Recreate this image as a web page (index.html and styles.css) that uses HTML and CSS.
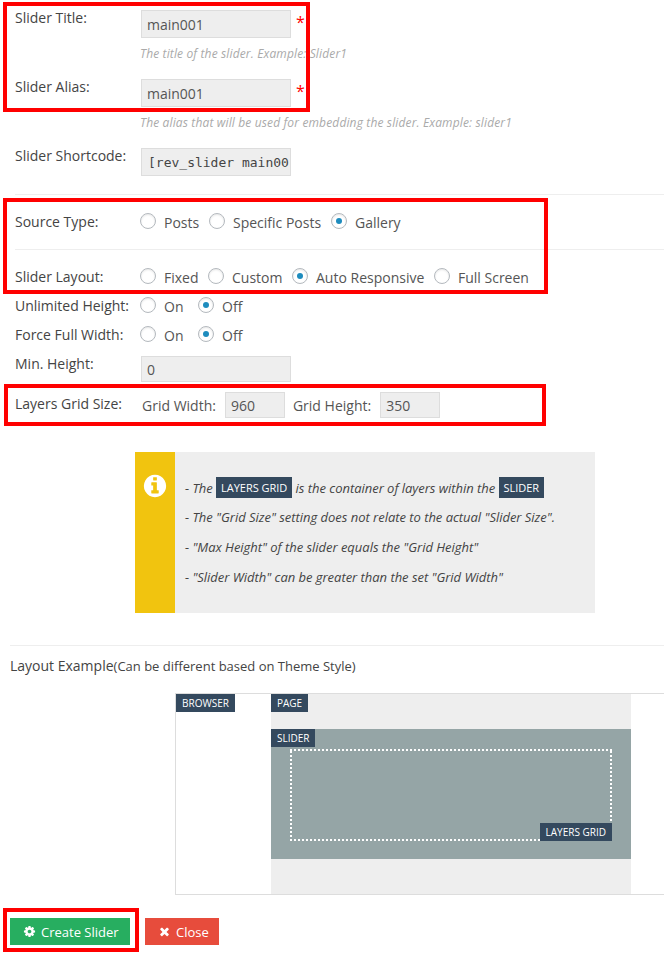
FILE: index.html
```html
<!DOCTYPE html>
<html lang="en">

<head>
    <meta charset="UTF-8">
    <title>Slider Settings</title>
    <link rel="stylesheet" href="styles.css">
</head>

<body>
    <div class="page">
        <div class="row row-title">
            <span class="label">Slider Title:</span>
            <span class="field">main001</span>
            <span class="req">*</span>
        </div>
        <p class="hint hint-title">The title of the slider. Example: Slider1</p>
        <div class="row">
            <span class="label">Slider Alias:</span>
            <span class="field">main001</span>
            <span class="req">*</span>
        </div>
        <p class="hint hint-alias">The alias that will be used for embedding the slider. Example: slider1</p>
        <div class="row">
            <span class="label">Slider Shortcode:</span>
            <span class="field mono">[rev_slider main00</span>
        </div>

        <hr class="sep sep-source">

        <div class="row row-radio">
            <span class="label">Source Type:</span>
            <span class="radio"></span><span class="opt opt-w1">Posts</span>
            <span class="radio"></span><span class="opt opt-w2">Specific Posts</span>
            <span class="radio on"></span><span class="opt">Gallery</span>
        </div>

        <hr class="sep sep-layout">

        <div class="row row-radio">
            <span class="label">Slider Layout:</span>
            <span class="radio"></span><span class="opt opt-w3">Fixed</span>
            <span class="radio"></span><span class="opt opt-w4">Custom</span>
            <span class="radio on"></span><span class="opt opt-w5">Auto Responsive</span>
            <span class="radio"></span><span class="opt">Full Screen</span>
        </div>
        <div class="row row-radio row-tight">
            <span class="label">Unlimited Height:</span>
            <span class="radio"></span><span class="opt opt-w6">On</span>
            <span class="radio on"></span><span class="opt">Off</span>
        </div>
        <div class="row row-radio row-tight">
            <span class="label">Force Full Width:</span>
            <span class="radio"></span><span class="opt opt-w6">On</span>
            <span class="radio on"></span><span class="opt">Off</span>
        </div>
        <div class="row row-min">
            <span class="label">Min. Height:</span>
            <span class="field">0</span>
        </div>
        <div class="row row-grid">
            <span class="label">Layers Grid Size:</span>
            <span class="grid-label grid-label-w">Grid Width:</span>
            <span class="field field-small">960</span>
            <span class="grid-label grid-label-h">Grid Height:</span>
            <span class="field field-small">350</span>
        </div>

        <div class="info">
            <div class="info-side">
                <svg class="info-icon" viewBox="0 0 1792 1792"><path fill="#fff" d="M1152 1376v-160q0-14-9-23t-23-9h-96v-512q0-14-9-23t-23-9h-320q-14 0-23 9t-9 23v160q0 14 9 23t23 9h96v320h-96q-14 0-23 9t-9 23v160q0 14 9 23t23 9h448q14 0 23-9t9-23zm-128-896v-160q0-14-9-23t-23-9h-192q-14 0-23 9t-9 23v160q0 14 9 23t23 9h192q14 0 23-9t9-23zm640 416q0 209-103 385.5t-279.5 279.5-385.5 103-385.5-103-279.5-279.5-103-385.5 103-385.5 279.5-279.5 385.5-103 385.5 103 279.5 279.5 103 385.5z"/></svg>
            </div>
            <div class="info-text">
                <p>- The <span class="tag tag-inline">LAYERS GRID</span> is the container of layers within the <span class="tag tag-inline">SLIDER</span></p>
                <p>- The "Grid Size" setting does not relate to the actual "Slider Size".</p>
                <p>- "Max Height" of the slider equals the "Grid Height"</p>
                <p>- "Slider Width" can be greater than the set "Grid Width"</p>
            </div>
        </div>

        <hr class="sep sep-example">

        <div class="example-title">Layout Example<small>(Can be different based on Theme Style)</small></div>

        <div class="browser">
            <span class="tag tag-browser">BROWSER</span>
            <div class="browser-page">
                <span class="tag tag-page">PAGE</span>
                <div class="slider-area">
                    <span class="tag tag-slider">SLIDER</span>
                    <div class="layers-grid">
                        <span class="tag tag-grid">LAYERS GRID</span>
                    </div>
                </div>
            </div>
        </div>

        <div class="buttons">
            <a class="btn btn-green">
                <svg class="btn-icon" viewBox="0 0 1792 1792"><path fill="#fff" d="M1152 896q0-106-75-181t-181-75-181 75-75 181 75 181 181 75 181-75 75-181zm512-109v222q0 12-8 23t-20 13l-185 28q-19 54-39 91 35 50 107 138 10 12 10 25t-9 23q-27 37-99 108t-94 71q-12 0-26-9l-138-108q-44 23-91 38-16 136-29 186-7 28-36 28h-222q-14 0-24.500-8.500t-11.500-21.500l-28-184q-49-16-90-37l-141 107q-10 9-25 9-14 0-25-11-126-114-165-168-7-10-7-23 0-12 8-23 15-21 51-66.500t54-70.500q-27-50-41-99l-183-27q-13-2-21-12.500t-8-23.500v-222q0-12 8-23t19-13l186-28q14-46 39-92-40-57-107-138-10-12-10-24 0-10 9-23 26-36 98.500-107.500t94.500-71.500q13 0 26 10l138 107q44-23 91-38 16-136 29-186 7-28 36-28h222q14 0 24.500 8.500t11.500 21.500l28 184q49 16 90 37l142-107q9-9 24-9 13 0 25 10 129 119 165 170 7 8 7 22 0 12-8 23-15 21-51 66.500t-54 70.500q26 50 41 98l183 28q13 2 21 12.500t8 23.500z"/></svg>
                Create Slider
            </a>
            <a class="btn btn-red">
                <svg class="btn-icon" viewBox="0 0 1792 1792"><path fill="#fff" d="M1490 1322q0 40-28 68l-136 136q-28 28-68 28t-68-28l-294-294-294 294q-28 28-68 28t-68-28l-136-136q-28-28-28-68t28-68l294-294-294-294q-28-28-28-68t28-68l136-136q28-28 68-28t68 28l294 294 294-294q28-28 68-28t68 28l136 136q28 28 28 68t-28 68l-294 294 294 294q28 28 28 68z"/></svg>
                Close
            </a>
        </div>

        <!-- red annotation boxes drawn over the form -->
        <div class="mark mark-title"></div>
        <div class="mark mark-source"></div>
        <div class="mark mark-grid"></div>
        <div class="mark mark-create"></div>
    </div>
</body>

</html>
```

FILE: styles.css
```css
html, body {
    margin: 0;
    padding: 0;
    background-color: #fff;
}

.page {
    position: relative;
    width: 664px;
    height: 953px;
    overflow: hidden;
    padding-top: 10px;
    box-sizing: border-box;
    font-family: "Open Sans", sans-serif;
    font-size: 14px;
    color: #555;
}

.row {
    display: flex;
    align-items: flex-start;
    padding-left: 15px;
}

.label {
    width: 126px;
    flex: none;
    line-height: 16px;
    color: #444;
}

.field {
    width: 150px;
    height: 28px;
    box-sizing: border-box;
    padding-left: 5px;
    background-color: #eee;
    border: 1px solid #ddd;
    line-height: 27px;
    white-space: nowrap;
    overflow: hidden;
}

.field-small {
    width: 60px;
    padding-left: 5px;
    height: 28px;
}

.mono {
    font-family: "DejaVu Sans Mono", "Liberation Mono", monospace;
    font-size: 13px;
    padding-left: 6px;
    color: #444;
}

.req {
    margin-left: 5px;
    color: #f00;
    font-size: 16px;
    line-height: 24px;
}

.hint {
    margin: 0;
    padding-left: 140px;
    font-size: 12px;
    font-style: italic;
    line-height: 16px;
    letter-spacing: 0.14px;
    color: #aaa;
    white-space: nowrap;
}

.hint-title {
    margin-top: 8px;
    margin-bottom: 17px;
}

.hint-alias {
    margin-top: 8px;
    margin-bottom: 17px;
}

.sep {
    margin: 0 0 0 15px;
    border: 0;
    border-top: 1px solid #eee;
}

.sep-source {
    margin-top: 18px;
    margin-bottom: 18px;
}

.sep-layout {
    margin-top: 16px;
    margin-bottom: 18px;
}

.row-radio {
    align-items: center;
    height: 20px;
}

.row-radio .label {
    margin-top: -3px;
    margin-right: -1px;
}

.row-tight {
    margin-top: 9px;
}

.radio {
    position: relative;
    width: 16px;
    height: 16px;
    flex: none;
    box-sizing: border-box;
    border: 1px solid #b4b9be;
    border-radius: 50%;
    background-color: #fff;
    box-shadow: inset 0 1px 2px rgba(0, 0, 0, 0.1);
    margin-top: -4px;
}

.radio.on::before {
    content: "";
    position: absolute;
    top: 4px;
    left: 4px;
    width: 6px;
    height: 6px;
    border-radius: 50%;
    background-color: #1e8cbe;
}

.opt {
    margin-top: -2px;
    margin-left: 8px;
    white-space: nowrap;
}

.opt-w1 { width: 45px; }
.opt-w2 { width: 98px; }
.opt-w3 { width: 44px; }
.opt-w4 { width: 60px; }
.opt-w5 { width: 118px; }
.opt-w6 { width: 34px; }

.row-min {
    margin-top: 10px;
}

.row-grid {
    margin-top: 10px;
    align-items: center;
}

.row-min .field {
    height: 26px;
    line-height: 25px;
}

.row-grid .field {
    height: 26px;
    line-height: 25px;
}

.row-grid .label {
    margin-top: -3px;
}

.grid-label {
    color: #555;
    white-space: nowrap;
}

.grid-label-w {
    margin-left: 1px;
    margin-right: 9px;
}

.grid-label-h {
    margin-left: 8px;
    margin-right: 9px;
}

.info {
    display: flex;
    width: 460px;
    height: 161px;
    margin: 34px 0 0 135px;
    background-color: #eee;
}

.info-side {
    width: 40px;
    flex: none;
    background-color: #f1c40f;
    text-align: center;
}

.info-icon {
    display: block;
    width: 26px;
    height: 26px;
    margin: 21px auto 0;
}

.info-text {
    padding: 26px 0 0 10px;
    font-size: 13px;
    font-style: italic;
    letter-spacing: -0.03px;
    color: #444;
}

.info-text p {
    margin: 0 0 10px;
    line-height: 20px;
    white-space: nowrap;
}

.info-text p:first-child {
    margin-bottom: 9px;
}

.tag {
    display: inline-block;
    background-color: #34495e;
    color: #fff;
    font-style: normal;
    font-size: 10px;
    line-height: 18px;
    padding: 0 6px;
    white-space: nowrap;
}

.tag-inline {
    font-size: 11px;
    line-height: 21px;
    padding: 0 5px;
    margin: -4px 0 0;
    vertical-align: middle;
}

.sep-example {
    margin: 32px 0 0 10px;
}

.example-title {
    margin: 10px 0 0 10px;
    line-height: 20px;
    color: #444;
}

.example-title small {
    font-size: 13px;
}

.browser {
    position: relative;
    width: 600px;
    height: 202px;
    box-sizing: border-box;
    margin: 17px 0 0 175px;
    border: 1px solid #ddd;
    border-right: 0;
}

.tag-browser {
    position: absolute;
    top: 0;
    left: 0;
}

.browser-page {
    position: relative;
    width: 360px;
    height: 100%;
    margin-left: 95px;
    padding-top: 35px;
    box-sizing: border-box;
    background-color: #eee;
}

.tag-page {
    position: absolute;
    top: 0;
    left: 0;
}

.slider-area {
    position: relative;
    height: 130px;
    padding: 20px 19px 0;
    box-sizing: border-box;
    background-color: #95a5a6;
}

.tag-slider {
    position: absolute;
    top: 0;
    left: 0;
}

.layers-grid {
    position: relative;
    height: 92px;
    box-sizing: border-box;
    background-image:
        repeating-linear-gradient(90deg, #fff 0 2px, transparent 2px 4px),
        repeating-linear-gradient(90deg, #fff 0 2px, transparent 2px 4px),
        repeating-linear-gradient(0deg, #fff 0 2px, transparent 2px 4px),
        repeating-linear-gradient(0deg, #fff 0 2px, transparent 2px 4px);
    background-size: 100% 2px, 100% 2px, 2px 100%, 2px 100%;
    background-position: top, bottom, left, right;
    background-repeat: no-repeat;
}

.tag-grid {
    position: absolute;
    right: 0;
    bottom: 0;
}

.buttons {
    display: flex;
    gap: 15px;
    margin: 23px 0 0 10px;
}

.btn {
    display: flex;
    align-items: center;
    gap: 5px;
    height: 27px;
    box-sizing: border-box;
    padding: 0 0 0 13px;
    color: #fff;
    font-size: 13px;
    white-space: nowrap;
}

.btn-green {
    width: 120px;
    background-color: #27ae60;
}

.btn-red {
    width: 74px;
    background-color: #e74c3c;
}

.btn-icon {
    width: 13px;
    height: 13px;
    flex: none;
}

.mark {
    position: absolute;
    box-sizing: border-box;
    border: 4px solid #f00;
}

.mark-title {
    left: 3px;
    top: 2px;
    width: 307px;
    height: 110px;
}

.mark-source {
    left: 3px;
    top: 198px;
    width: 545px;
    height: 96px;
}

.mark-grid {
    left: 4px;
    top: 384px;
    width: 542px;
    height: 42px;
}

.mark-create {
    left: 3px;
    top: 908px;
    width: 136px;
    height: 44px;
}
```
